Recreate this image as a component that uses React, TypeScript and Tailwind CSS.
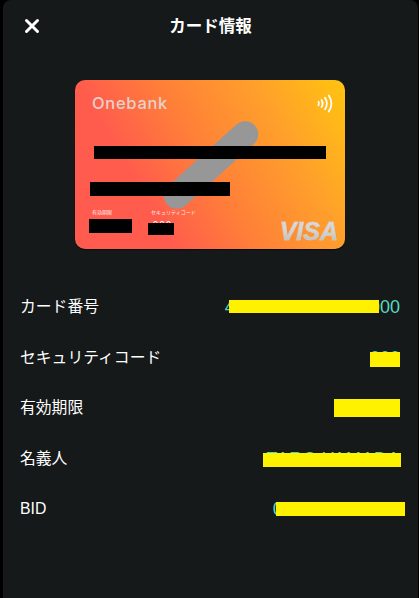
import React from 'react';
import { X } from 'lucide-react';

const JP_FONT = "font-['Liberation_Sans','Noto_Sans_CJK_JP',sans-serif]";

const rows = [
  { label: 'カード番号', value: '4000 0000 0000 0000', valueClass: '', mask: 'right-[21px] top-[5px] h-[13px] w-[150px]' },
  { label: 'セキュリティコード', value: '000', valueClass: '', mask: 'right-0 top-[6px] h-[15px] w-[30px]' },
  { label: '有効期限', value: '00/00', valueClass: '', mask: 'right-0 top-[3px] h-[18px] w-[66px]' },
  { label: '名義人', value: 'TARO YAMADA', valueClass: 'tracking-[0.5px]', mask: 'right-[-1px] top-[6px] h-[14px] w-[138px]' },
  { label: 'BID', value: '0000000000000', valueClass: '-mr-[3px]', mask: 'right-[-2px] top-[5px] h-[14px] w-[129px]' },
];

const Contactless = () => (
  <svg width="16" height="19" viewBox="0 0 16 19" fill="none" stroke="white" strokeLinecap="round" strokeWidth="1.8">
    <path d="M1.500 7.800c.6 1.100.6 2.400 0 3.500" />
    <path d="M4.600 6c1.300 2.200 1.300 4.900 0 7.100" />
    <path d="M8 3.800c2.300 3.500 2.300 8 0 11.500" />
    <path d="M11.800 1.500c3.200 4.900 3.200 11.100 0 16" />
  </svg>
);

const Card = () => (
  <div className="relative flex h-[169px] w-[270px] flex-col overflow-hidden rounded-[10px] bg-[linear-gradient(60deg,#ff5a4f_0%,#ff5c4d_27%,#ff8038_50%,#ffa02b_75%,#ffc40f_100%)] shadow-[0_1px_1px_rgba(0,0,0,0.6)]">
    {/* diagonal stripe behind the number */}
    <div className="absolute left-[77px] top-[72px] h-[26px] w-[118px] -rotate-[42deg] rounded-full bg-[#979797]" />

    <div className="flex items-start justify-between pl-[17px] pr-[12px] pt-[14px]">
      <span className="font-['Inter',sans-serif] text-[16.500px] font-medium leading-[18px] tracking-[0.7px] text-[#e6d2cb]">Onebank</span>
      <Contactless />
    </div>

    <div className="relative ml-[19px] mt-[33px] h-[13px] w-[232px] bg-black" />
    <div className="relative ml-[15px] mt-[23px] h-[14px] w-[140px] bg-black" />

    <div className="mt-[13px] flex flex-1 justify-between pb-[5px] pl-[14px] pr-[7px]">
      <div className="flex gap-[16px]">
        <div className="flex w-[43px] flex-col gap-[3px]">
          <span className="pl-[3px] text-[5px] leading-[7px] text-[#ffeee6]">有効期限</span>
          <div className="h-[14px] bg-black" />
        </div>
        <div className="flex w-[26px] flex-col gap-[3px]">
          <span className="whitespace-nowrap pl-[3px] text-[5px] leading-[7px] text-[#ffeee6]">セキュリティコード</span>
          <div className="relative pl-[5px] text-[9px] leading-[10px] tracking-[1.500px] text-white">
            000
            <div className="absolute left-0 top-[4px] h-[12px] w-[26px] bg-black" />
          </div>
        </div>
      </div>
      <span className="self-end bg-[linear-gradient(180deg,#dedcda_0%,#d6d4d2_50%,#b9b9b9_100%)] bg-clip-text font-['Liberation_Sans',sans-serif] text-[25px] font-bold italic leading-[25px] text-transparent [-webkit-text-stroke:0.5px_#cfcdcb]">VISA</span>
    </div>
  </div>
);

export default function App() {
  return (
    <div className={`h-[598px] w-[419px] overflow-hidden bg-black pl-[3px] pr-[1px] ${JP_FONT}`}>
      <div className="flex h-full flex-col rounded-t-[8px] bg-[#151919] text-white">
        <header className="relative flex h-[52px] items-center justify-center">
          <button className="absolute left-[18px] top-[15px]">
            <X size={22} strokeWidth={3.2} />
          </button>
          <h1 className="text-[16.500px] font-bold leading-[24px]">カード情報</h1>
        </header>

        <div className="flex justify-center pr-[1px] pt-[28px]">
          <Card />
        </div>

        <ul className="mt-[32.750px] flex flex-col pl-[17px] pr-[18px]">
          {rows.map(row => (
            <li key={row.label} className="flex h-[50.500px] items-center justify-between text-[15.800px]">
              <span>{row.label}</span>
              <span className={`relative text-[18px] leading-[24px] text-[#55d8c1] ${row.valueClass}`}>
                {row.value}
                <span className={`absolute bg-[#fff200] ${row.mask}`} />
              </span>
            </li>
          ))}
        </ul>
      </div>
    </div>
  );
}
